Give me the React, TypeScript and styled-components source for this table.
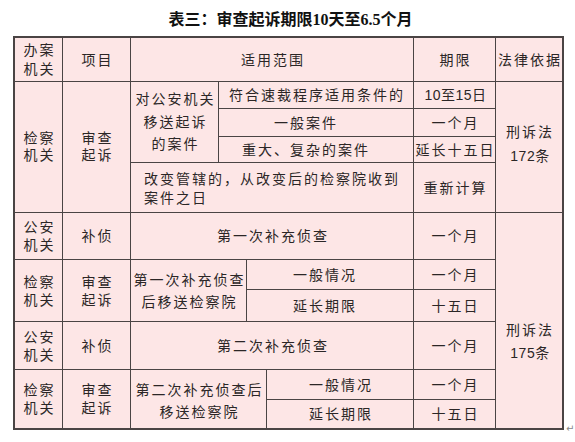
import React from 'react';
import styled, {createGlobalStyle} from "styled-components";

const GlobalStyle = createGlobalStyle`
  html, body {
    margin: 0;
    padding: 0;
    background: #ffffff;
  }
`

type CellProps = {
    col: string
    row: string
    align?: 'left' | 'center'
    lh?: number
    pad?: string
    children: React.ReactNode
}

const Cell: React.FC<CellProps> = ({col, row, align = 'center', lh = 18, pad = '0', children}) => {
    return (
        <StCell $col={col} $row={row} $align={align} $pad={pad}>
            <StLabel $lh={lh} $align={align}>{children}</StLabel>
        </StCell>
    )
}

export default function App() {
    return (
        <StPage>
            <GlobalStyle/>
            <StTitle>表三：审查起诉期限10天至6.5个月</StTitle>
            <StTableRow>
                <StGrid>
                    {/* header */}
                    <Cell col="1" row="1" lh={19}>办案<br/>机关</Cell>
                    <Cell col="2" row="1">项目</Cell>
                    <Cell col="3 / 7" row="1">适用范围</Cell>
                    <Cell col="7" row="1">期限</Cell>
                    <Cell col="8" row="1">法律依据</Cell>

                    {/* 检察机关 审查起诉 */}
                    <Cell col="1" row="2 / 6" lh={17}>检察<br/>机关</Cell>
                    <Cell col="2" row="2 / 6" lh={17}>审查<br/>起诉</Cell>
                    <Cell col="3" row="2 / 5" lh={22.5}>对公安机关<br/>移送起诉<br/>的案件</Cell>
                    <Cell col="4 / 7" row="2">符合速裁程序适用条件的</Cell>
                    <Cell col="7" row="2"><StNum>10至15日</StNum></Cell>
                    <Cell col="4 / 7" row="3" pad="0 22px 0 0">一般案件</Cell>
                    <Cell col="7" row="3">一个月</Cell>
                    <Cell col="4 / 7" row="4" pad="0 22px 0 0">重大、复杂的案件</Cell>
                    <Cell col="7" row="4">延长十五日</Cell>
                    <Cell col="3 / 7" row="5" align="left" lh={19} pad="2px 0 0 13px">
                        改变管辖的，从改变后的检察院收到<br/>案件之日
                    </Cell>
                    <Cell col="7" row="5">重新计算</Cell>
                    <Cell col="8" row="2 / 6" lh={24} pad="0 0 6px 0">刑诉法<br/><StNum>172条</StNum></Cell>

                    {/* 公安机关 补侦 */}
                    <Cell col="1" row="6" lh={18}>公安<br/>机关</Cell>
                    <Cell col="2" row="6">补侦</Cell>
                    <Cell col="3 / 7" row="6">第一次补充侦查</Cell>
                    <Cell col="7" row="6">一个月</Cell>
                    <Cell col="8" row="6 / 12" lh={23} pad="42px 0 0 0">刑诉法<br/><StNum>175条</StNum></Cell>

                    {/* 检察机关 第一次补充侦查后 */}
                    <Cell col="1" row="7 / 9" lh={18}>检察<br/>机关</Cell>
                    <Cell col="2" row="7 / 9" lh={18}>审查<br/>起诉</Cell>
                    <Cell col="3 / 5" row="7 / 9" lh={22}>第一次补充侦查<br/>后移送检察院</Cell>
                    <Cell col="5 / 7" row="7" pad="0 12px 0 0">一般情况</Cell>
                    <Cell col="7" row="7">一个月</Cell>
                    <Cell col="5 / 7" row="8" pad="0 12px 0 0">延长期限</Cell>
                    <Cell col="7" row="8">十五日</Cell>

                    {/* 公安机关 第二次 */}
                    <Cell col="1" row="9" lh={18}>公安<br/>机关</Cell>
                    <Cell col="2" row="9">补侦</Cell>
                    <Cell col="3 / 7" row="9">第二次补充侦查</Cell>
                    <Cell col="7" row="9">一个月</Cell>

                    {/* 检察机关 第二次补充侦查后 */}
                    <Cell col="1" row="10 / 12" lh={18}>检察<br/>机关</Cell>
                    <Cell col="2" row="10 / 12" lh={18}>审查<br/>起诉</Cell>
                    <Cell col="3 / 6" row="10 / 12" lh={22} pad="4px 0 0 0">第二次补充侦查后<br/>移送检察院</Cell>
                    <Cell col="6" row="10">一般情况</Cell>
                    <Cell col="7" row="10">一个月</Cell>
                    <Cell col="6" row="11">延长期限</Cell>
                    <Cell col="7" row="11">十五日</Cell>
                </StGrid>
                <StReturnMark>↵</StReturnMark>
            </StTableRow>
        </StPage>
    );
}

const StPage = styled.div`
  width: 575px;
  height: 442px;
  box-sizing: border-box;
  padding-left: 13px;
  overflow: hidden;
`

const StTitle = styled.div`
  height: 36px;
  width: 551px;
  display: flex;
  align-items: center;
  justify-content: center;
  padding-left: 4px;
  box-sizing: border-box;
  font-family: "Liberation Serif", "Noto Sans CJK SC", serif;
  font-weight: 700;
  font-size: 16px;
  color: #111;
`

const StTableRow = styled.div`
  display: flex;
  align-items: flex-end;
`

const StGrid = styled.div`
  display: grid;
  grid-template-columns: 47px 67px 87px 27px 19px 146px 81px 66px;
  grid-template-rows: 43px 26px 27px 25px 49px 46px 29px 31px 47px 29px 28px;
  gap: 1px;
  padding: 2px;
  background: #4a4444;
  font-family: "Liberation Sans", "Noto Sans CJK SC", sans-serif;
  font-size: 14px;
  color: #2b2626;
`

const StCell = styled.div<{ $col: string, $row: string, $align: 'left' | 'center', $pad: string }>`
  grid-column: ${p => p.$col};
  grid-row: ${p => p.$row};
  background: #fde6e6;
  display: flex;
  align-items: center;
  justify-content: ${p => p.$align === 'left' ? 'flex-start' : 'center'};
  padding: ${p => p.$pad};
  box-sizing: border-box;
  overflow: hidden;
`

const StLabel = styled.span<{ $lh: number, $align: 'left' | 'center' }>`
  display: block;
  line-height: ${p => p.$lh}px;
  letter-spacing: 2px;
  margin-right: -2px;
  text-align: ${p => p.$align};
  white-space: nowrap;
`

const StNum = styled.span`
  letter-spacing: 0.5px;
`

const StReturnMark = styled.span`
  font-family: "DejaVu Sans", sans-serif;
  font-size: 10px;
  line-height: 10px;
  color: #888;
  margin-left: 2px;
  margin-bottom: -4px;
`
